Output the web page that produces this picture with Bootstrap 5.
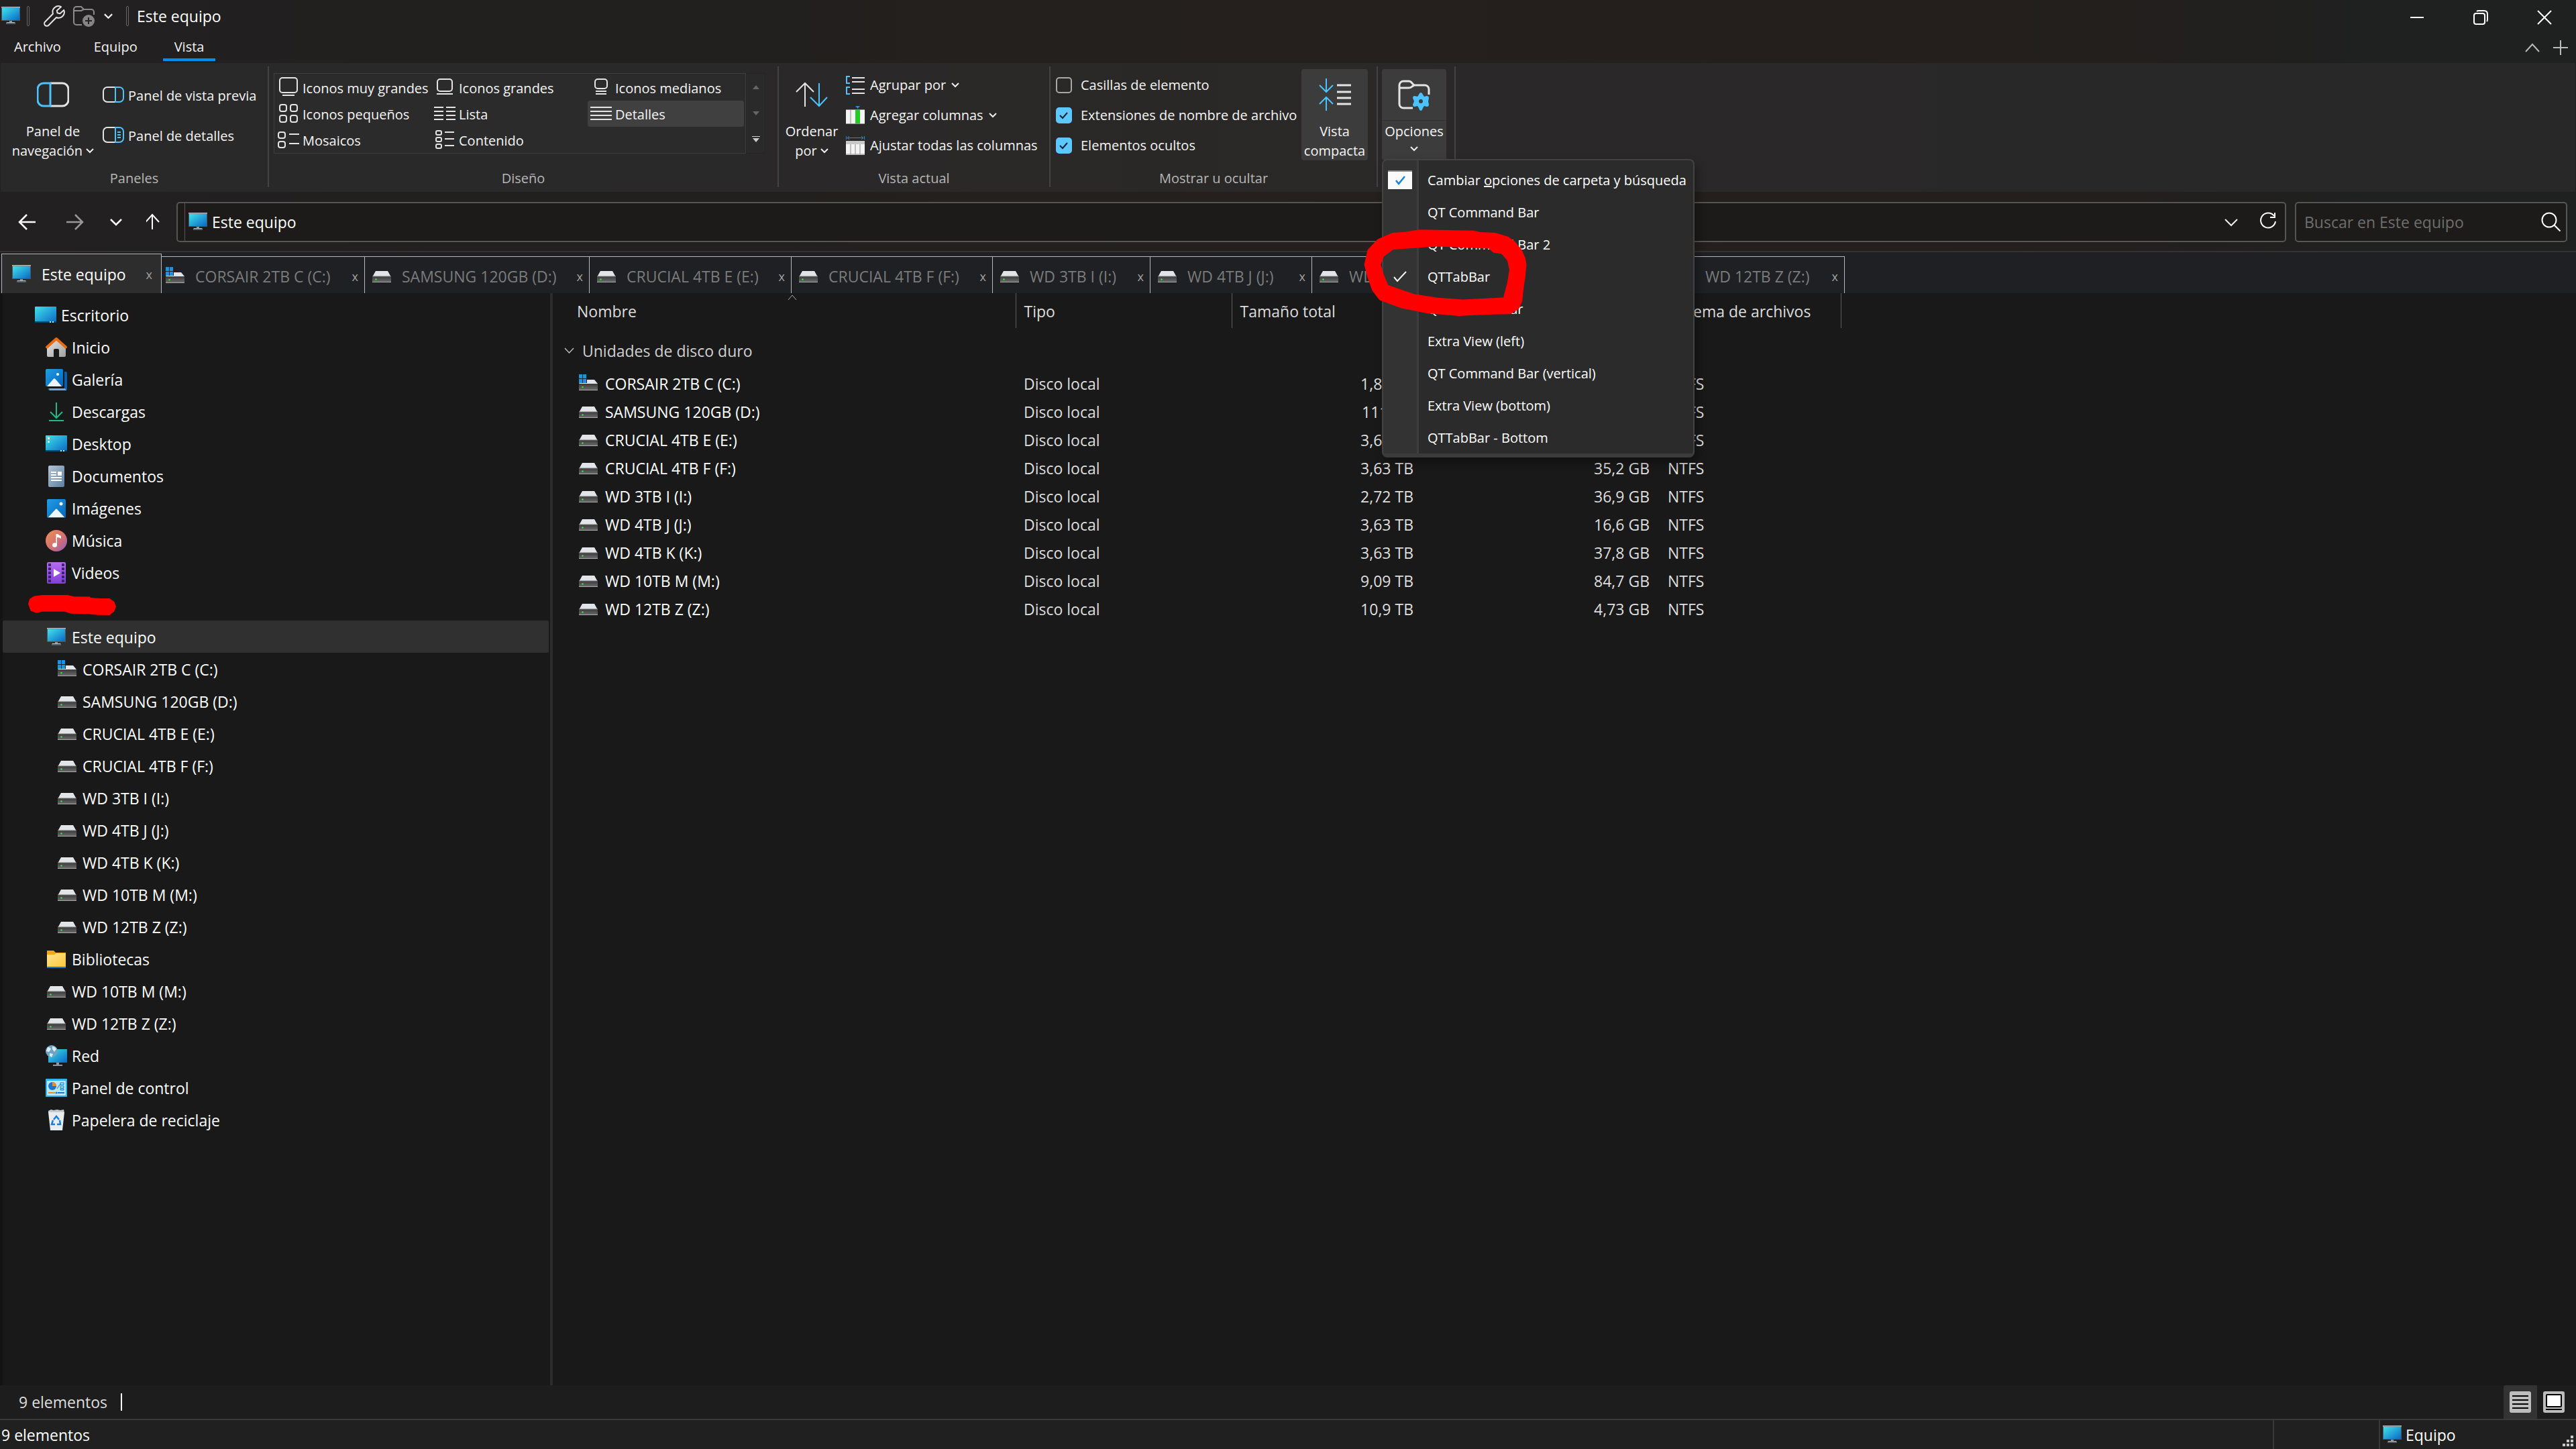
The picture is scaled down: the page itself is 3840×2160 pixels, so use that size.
<!DOCTYPE html>
<html lang="es" data-bs-theme="dark">
<head>
<meta charset="utf-8">
<meta name="viewport" content="width=device-width, initial-scale=1">
<title>Este equipo</title>
<link href="https://cdn.jsdelivr.net/npm/bootstrap@5.3.0/dist/css/bootstrap.min.css" rel="stylesheet">
<style>
:root{--ui:"Open Sans","Noto Sans",sans-serif}
body{font-family:var(--ui);font-size:23px;line-height:30px;color:#fff;background:#191919;overflow:hidden}
svg{display:block;flex:none}
button{font:inherit;color:inherit;background:none;border:0;padding:0}
.i28{width:28px;height:28px}.i32{width:32px;height:32px}.i48{width:48px;height:48px}
.ln{fill:none;stroke:#e4e4e4;stroke-width:2}
.ln.thick{stroke-width:3}
.chrome-bg{background:linear-gradient(90deg,#222021 0,#21201e 25%,#25201d 48%,#241f1c 78%,#1f2020 92%)}
.titlebar{height:48px;padding-left:2px}
.title-tools{gap:12px;margin:0 18px 0 21px}
.vsep{width:4px;height:30px;border:1px solid #666;border-radius:2px}
.app-sep{margin-left:10px}
.win-btns{gap:73px;padding-right:36px}
.menu-tabs{height:46px;font-size:20px;padding-left:21px;gap:49px}
.menu-tabs a{color:#f2f2f2;text-decoration:none;height:43px;line-height:44px;border-bottom:4px solid transparent}
.menu-tabs a.active{border-bottom-color:#0090f5;padding:0 17px;margin-left:-11px}
.ribbon{background:linear-gradient(90deg,#292929 0,#2a292a 20%,#2a2827 45%,#2a2829 72%,#282828 80%);height:192px;padding:5px 0 7px;margin:0 1px;font-size:20px;line-height:29px;color:#f4f4f4}
.rgroup{border-right:2px solid #434343;display:flex;flex-direction:column}
.rgroup>div{flex:1 1 auto}
.rlabel{text-align:center;line-height:26px;color:#b6b6b6;margin:0}
.g-panes{width:400px}.g-layout{width:760px}.g-view{width:405px}.g-show{width:488px}.g-opt{width:116px}
.big{height:136px;margin-top:4px;display:flex;flex-direction:column;align-items:center;padding-top:14px;border-radius:4px}
.big svg.i48{margin-bottom:16px}
.big.on{background:#3c3c3c}
.nav-btn{width:130px;margin-left:13px}.sort-btn{width:84px;margin-left:7px}.compact-btn{width:99px}
.opt-btn.on{width:96px;background:linear-gradient(#3c3c3c 76px,#313131 76px,#313131 77px,#3c3c3c 77px)}
.small-btn{display:flex;align-items:center;text-align:left;white-space:nowrap}
.pcol{padding-top:20px;gap:14px;margin-left:9px}.pcol .small-btn{height:46px;gap:6px}
.gallery{border:1px solid #3e3e3e;width:704px;height:120px;margin:10px 0 0 7px;padding:1px;display:grid;grid-template-columns:repeat(3,233px);grid-auto-rows:39px;background:#2b2b2b}
.gallery button{padding:1px 0 0 4px;gap:5px;border-radius:4px}
.gallery button.on{background:#404040}
.gscroll{width:29px;height:120px;margin-top:10px;border:1px solid #252525;background:#2a2a2a}
.gscroll button{height:39px;width:27px;display:flex;align-items:center;justify-content:center}
.vcol{padding-top:5px}.vcol .small-btn,.vcol .form-check{height:45px;gap:8px}
.view-col{margin-left:9px}
.check-col{width:374px;padding-left:8px}
.vcol .form-check{display:flex;align-items:center;padding:0;margin:0;min-height:0;gap:13px}
.vcol .form-check-input{width:24px;height:24px;margin:0;float:none;background-color:transparent;border:2px solid #a8a8a8;border-radius:5px;flex:none}
.vcol .form-check-input:checked{background-color:#5cc8ff;border-color:#5cc8ff;background-image:url("data:image/svg+xml,%3csvg xmlns='http://www.w3.org/2000/svg' viewBox='0 0 20 20'%3e%3cpath fill='none' stroke='%23102030' stroke-width='2' d='M4 10l4 4 7-8'/%3e%3c/svg%3e")}
.opt-wrap{margin-left:6px}
.opt-menu{position:absolute;top:138px;left:0;width:466px;padding:5px 0 0;border:2px solid #434343;border-radius:8px;background:linear-gradient(90deg,#333 50px,#3d3d3d 50px,#3d3d3d 53px,#2b2b2b 53px);box-shadow:4px 8px 14px rgba(0,0,0,.35);z-index:20;border-bottom:6px solid #3b3b3b;font-size:20px;display:block}
.opt-menu button{height:48px;width:100%;display:flex;align-items:center;color:#fff;text-align:left;white-space:nowrap}
.opt-menu .slot{width:66px;padding-left:7px;flex:none}
.ring{position:absolute;left:-31px;top:100px;width:249px;height:134px;pointer-events:none}
.navrow{height:88px;padding:2px 13px 0 0}
.navrow .arrows{width:263px;padding-left:24px;gap:36px}
.field{height:60px;border:2px solid #555;border-radius:5px;background:#1c1b19}
.crumb{height:56px;border-left:1px solid #555;margin-left:10px;padding-left:5px;gap:7px}
.addr-btns{gap:32px;margin-right:12px}
.search{width:406px;margin-left:13px;padding-right:7px}
.search input{background:none;border:0;color:#fff;padding:0 0 0 12px;outline:0;flex:1;min-width:0}
.search input::placeholder{color:#6e6e6e;opacity:1}
.tabstrip{border-top:2px solid #35322f;background:#1e2023;height:63px;display:grid;grid-template-columns:239px 303px 335px 301px 300px 235px 241px 246px 285px 263px;align-items:end;padding-left:2px;flex:none}
.tabstrip a{height:55px;border-top:1px solid #b8b8b8;border-right:1px solid #b8b8b8;color:#7b7b7b;text-decoration:none;display:flex;align-items:center;padding:4px 9px 0 6px;white-space:nowrap}
.tabstrip a svg{margin-right:16px}
.tabstrip a.hdtab{padding-left:11px}
.tabstrip a i{font-style:normal;font-size:18px;margin-left:auto;color:#a0a0a0;line-height:20px}
.tabstrip a.active{height:59px;border-left:1px solid #b8b8b8;background:#2d2d2d;color:#fff;padding:2px 13px 0 15px}
.panes{min-height:0}
.tree{flex:0 0 820px;border-left:4px solid #131313;padding-top:8px}
.tree a{height:48px;display:flex;align-items:center;gap:7px;color:#fff;text-decoration:none;padding:1px 0 0 64px;margin-right:2px;border-radius:2px}
.tree a.l0{padding-left:48px}.tree a.l2{padding-left:82px;gap:9px}
.tree a.sel{background:#303030}
.tree .scrib{height:48px;padding:10px 0 0 38px}
.list{border-left:4px solid #2c2c2c;min-width:0}
.files{table-layout:fixed;width:1920px;border-collapse:collapse;color:#dedede}
.files th,.files td{font-weight:400;padding:0 12px;white-space:nowrap}
.files .cn{width:690px}.files .ct{width:322px}.files .cs{width:286px}.files .cf{width:352px}.files .cx{width:270px}
.files thead th{height:52px;border-right:1px solid #5c5c5c;color:#dcdcdc;padding-top:1px}
.files thead th:first-child{padding-left:36px;background:url("data:image/svg+xml,%3csvg xmlns='http://www.w3.org/2000/svg' width='14' height='8'%3e%3cpath fill='none' stroke='%23aaa' d='M1 8l6-7 6 7'/%3e%3c/svg%3e") no-repeat 350px 2px}
.files .grp th{height:62px;padding:6px 0 0 17px;color:#d0d0d0}
.grp div{gap:12px}
.files tbody td{height:42px}
.files tbody td:first-child{color:#fff;padding-left:39px}
.files td div{gap:11px}
.files .num{text-align:right;padding-right:15px}
.status1{height:50px;background:#1d1d1d;padding:0 8px 0 28px;flex:none;color:#dedede}
.status1 .bar{width:2px;height:26px;background:#fff;margin-left:20px}
.status1 .vb{width:50px;height:50px;display:flex;align-items:center;justify-content:center}
.status1 .vb.on{background:#333;border-radius:3px 0 0 0}
.status2{height:45px;border-top:2px solid #393939;background:#202020;padding-left:2px;flex:none}
.status2 .cell{border-left:2px solid #393939;height:43px;width:158px}
.status2 .cell.zone{width:294px;padding-left:4px;gap:6px}
</style>
</head>
<body class="d-flex flex-column vh-100">
<svg width="0" height="0" class="position-absolute" aria-hidden="true">
<defs>
<linearGradient id="blu" x1="0" y1="0" x2="1" y2="1"><stop offset="0" stop-color="#3fe3ea"/><stop offset="1" stop-color="#0a68c4"/></linearGradient>
<linearGradient id="pic" x1="0" y1="0" x2="1" y2="1"><stop offset="0" stop-color="#1f9fe8"/><stop offset="1" stop-color="#0663b8"/></linearGradient>
<linearGradient id="drv" x1="0" y1="0" x2="0" y2="1"><stop offset="0" stop-color="#3a3a3a"/><stop offset="1" stop-color="#6e6e6e"/></linearGradient>
<linearGradient id="mus" x1="0" y1="0" x2="1" y2="1"><stop offset="0" stop-color="#f2914f"/><stop offset=".6" stop-color="#cf6d78"/><stop offset="1" stop-color="#8a5fc0"/></linearGradient>
<linearGradient id="vid" x1="0" y1="0" x2="0" y2="1"><stop offset="0" stop-color="#b56cf0"/><stop offset="1" stop-color="#8240dc"/></linearGradient>
<linearGradient id="doc" x1="0" y1="0" x2="1" y2="1"><stop offset="0" stop-color="#b4c4d6"/><stop offset="1" stop-color="#5c7f9f"/></linearGradient>
<linearGradient id="fol" x1="0" y1="0" x2="1" y2="1"><stop offset="0" stop-color="#ffe394"/><stop offset="1" stop-color="#fcc838"/></linearGradient>
<linearGradient id="hom" x1="0" y1="0" x2="1" y2="1"><stop offset="0" stop-color="#e6e6e6"/><stop offset="1" stop-color="#a0a0a0"/></linearGradient>
</defs>
<symbol id="pc" viewBox="0 0 28 28"><path d="M0 0h28v21H0z" fill="#4a5560"/><path d="M0 0h28v1.500H0z" fill="#b9c2ca"/><path d="M1 2h26v18H1z" fill="url(#blu)"/><path d="M12 21h4v2h-4z" fill="#8a949c"/><path d="M7 23h14v3H7z" fill="#56616b"/><path d="M8 23h12v1H8z" fill="#b9c2ca"/></symbol>
<symbol id="hd" viewBox="0 0 28 28"><path d="M5 6h18l5 9H0z" fill="#e3e4e8"/><path d="M0 14h28v9H0z" fill="url(#drv)"/><path d="M0 13.500h28v1H0z" fill="#777"/><path d="M0 22h28v1H0z" fill="#a8a8a8"/><circle cx="5.500" cy="18.500" r="1.300" fill="#3be03b"/></symbol>
<symbol id="hdw" viewBox="0 0 28 28"><path d="M6 8h17l5 6H0z" fill="#e3e4e8"/><path d="M0 14h28v10H0z" fill="url(#drv)"/><path d="M0 23h28v1H0z" fill="#a8a8a8"/><circle cx="5.500" cy="19" r="1.300" fill="#3be03b"/><path d="M0 0h12v13H0z" fill="#1e2023"/><path d="M0 0h5v6H0zM6 0h5v6H6zM0 7h5v6H0zM6 7h5v6H6z" fill="#1b93e4"/></symbol>
<symbol id="desk" viewBox="0 0 32 32"><rect y="3" width="32" height="24" rx="1" fill="url(#blu)"/><path d="M0 25h32v1a1 1 0 0 1-1 1H1a1 1 0 0 1-1-1z" fill="#0b4675"/><path d="M22 25h2v2h-2zM26 25h2v2h-2z" fill="#cfe6f5"/></symbol>
<symbol id="desk2" viewBox="0 0 32 32"><use href="#desk"/><path d="M3 6h3v3H3zM3 11h3v3H3z" fill="#fff"/></symbol>
<symbol id="home" viewBox="0 0 32 32"><path d="M2 15L16 4l14 11v13a2 2 0 0 1-2 2h-8V20h-8v10H4a2 2 0 0 1-2-2z" fill="url(#hom)"/><path d="M12 30V20q0-2 2-2h4q2 0 2 2v10z" fill="#191919"/><path d="M2 15.500L16 3l14 12.500" fill="none" stroke="#ea6a0c" stroke-width="4" stroke-linejoin="round" stroke-linecap="round"/></symbol>
<symbol id="gal" viewBox="0 0 32 32"><path d="M28 4h2a2 2 0 0 1 2 2v24a2 2 0 0 1-2 2H6a2 2 0 0 1-2-3h24z" fill="#0a5eb0"/><path d="M5 29h24l2 3H6z" fill="#74a8dc"/><path d="M26 0h2v28H4v-2h22z" fill="#191919"/><rect width="26" height="26" rx="2" fill="url(#pic)"/><path d="M2 26l9.500-11q1.500-1.600 3 0L24 26z" fill="#e9f4fd"/><circle cx="18" cy="8" r="2" fill="#fff"/></symbol>
<symbol id="down" viewBox="0 0 32 32"><path d="M16 2v22M7 16l9 9 9-9M5 29h22" fill="none" stroke="#22b88c" stroke-width="2"/></symbol>
<symbol id="docs" viewBox="0 0 32 32"><rect x="4" width="24" height="32" rx="2" fill="url(#doc)"/><path d="M8 9h8v2H8zM8 13h8v2H8zM18 9h6v6h-6zM8 17h16v2H8zM8 21h16v2H8z" fill="#fff"/></symbol>
<symbol id="img" viewBox="0 0 32 32"><rect x="2" y="2" width="28" height="28" rx="2" fill="url(#pic)"/><path d="M4 29l11-12q1-1 2 0l11 12z" fill="#eef6fd"/><circle cx="23" cy="9" r="2.500" fill="#fff"/></symbol>
<symbol id="music" viewBox="0 0 32 32"><circle cx="16" cy="16" r="16" fill="url(#mus)"/><ellipse cx="13.500" cy="22.500" rx="3.500" ry="3.300" fill="#fff"/><path d="M15.500 6v17H17V11q4 0 6 2V9q-3-1-5-3z" fill="#fff"/></symbol>
<symbol id="video" viewBox="0 0 32 32"><rect x="2" width="28" height="32" rx="2" fill="url(#vid)"/><path d="M6 2v28M26 2v28" stroke="#3b2170" stroke-width="4" stroke-dasharray="4 2"/><path d="M12 10l10 6-10 6z" fill="#fff"/></symbol>
<symbol id="lib" viewBox="0 0 32 32"><path d="M2 3h10l3 3h15v20H2z" fill="#f0a818"/><path d="M2 9h11l3-2h14v20H2z" fill="url(#fol)"/><path d="M2 27h28v2H2z" fill="#1280d8"/></symbol>
<symbol id="net" viewBox="0 0 32 32"><path d="M4 6h28v20H4z" fill="url(#blu)"/><path d="M16 26h4v3h-4zM11 29h14v2H11z" fill="#8b98a6"/><circle cx="9" cy="9" r="9" fill="#6fa5c4"/><path d="M3 3q4 0 5 3l-3 4-4-1zM10 2q4 0 6 4l-3 4-3-4zM6 12l5 1-2 5-3-2z" fill="#d9edf6"/></symbol>
<symbol id="cpl" viewBox="0 0 32 32"><rect y="2" width="32" height="27" rx="1" fill="#2fb4f0"/><path d="M2 5h28v22H2z" fill="#b9e6fb"/><circle cx="10" cy="13" r="6" fill="#1779cf"/><path d="M10 13V7a6 6 0 0 1 6 6z" fill="#f58a1f"/><path d="M17 17l4-6h2M22 8h5v3h-5zM22 13h5v3h-5zM22 17h5v2h-5z" fill="none" stroke="#1779cf"/><path d="M4 23h10" stroke="#f58a1f" stroke-width="2"/><path d="M18 23h10" stroke="#1779cf" stroke-width="2"/><circle cx="16" cy="23" r="1.500" fill="#1779cf"/></symbol>
<symbol id="bin" viewBox="0 0 32 32"><path d="M4 2l4-2 4 1 5-1 5 1 5-1 1 5H4z" fill="#c4ccd2"/><path d="M4 4h24l-3 27H7z" fill="#e9edf0"/><path d="M12 15l4-5 4 5M21 16l1 6h-5M14 22h-5l2-6" fill="none" stroke="#1a7fd6" stroke-width="2.500"/></symbol>
<symbol id="chev" viewBox="0 0 12 8"><path d="M1 1l5 5 5-5" fill="none" stroke="#eee" stroke-width="2"/></symbol>
</svg>

<header class="chrome-bg flex-shrink-0">
  <div class="titlebar d-flex align-items-center">
    <svg class="i28"><use href="#pc"/></svg>
    <span class="vsep app-sep"></span>
    <div class="title-tools d-flex align-items-center">
      <button aria-label="Propiedades"><svg class="i32" viewBox="0 0 32 32"><path class="ln" d="M26 2.200A8.500 8.500 0 0 0 14 12.500L2.200 24.500a3.600 3.600 0 0 0 5.200 5.200L19 18A8.500 8.500 0 0 0 30.200 7l-5.700 5.200-4-1-.7-3.400z" stroke-linejoin="round"/></svg></button>
      <button aria-label="Nueva carpeta"><svg class="i32" viewBox="0 0 32 32"><path d="M13 29H5a4 4 0 0 1-4-4V6a4 4 0 0 1 4-4h7l4 4h11a4 4 0 0 1 4 4v4M1 8h11l4-2" fill="none" stroke="#8b8b8b" stroke-width="2"/><circle cx="23" cy="23" r="9" fill="#858585"/><path d="M23 18v10M18 23h10" stroke="#222" stroke-width="2"/></svg></button>
      <button aria-label="Personalizar"><svg width="17" height="9"><use href="#chev"/></svg></button>
    </div>
    <span class="vsep"></span>
    <span class="ps-2 ms-1">Este equipo</span>
    <div class="win-btns ms-auto d-flex align-items-center pt-1">
      <button aria-label="Minimizar"><svg width="22" height="22"><path d="M1 11h20" stroke="#fff" stroke-width="2"/></svg></button>
      <button aria-label="Restaurar"><svg width="22" height="22" fill="none" stroke="#fff" stroke-width="2"><rect x="1" y="5" width="16" height="16" rx="3"/><path d="M5 2q1-1 3-1h8q5 0 5 5v8q0 2-1 3"/></svg></button>
      <button aria-label="Cerrar"><svg width="22" height="22"><path d="M1 1l20 20M21 1L1 21" stroke="#fff" stroke-width="2"/></svg></button>
    </div>
  </div>
  <nav class="menu-tabs d-flex">
    <a href="#">Archivo</a><a href="#">Equipo</a><a href="#" class="active">Vista</a>
    <div class="ms-auto d-flex align-items-center gap-3 pe-2 me-1">
      <button aria-label="Contraer" class="me-1"><svg width="22" height="14"><path d="M1 13L11 2l10 11" fill="none" stroke="#bbb" stroke-width="2"/></svg></button>
      <button aria-label="Agregar"><svg width="22" height="24"><path d="M11 1v22M0 12h22" stroke="#bbb" stroke-width="2"/></svg></button>
    </div>
  </nav>
  <section class="ribbon d-flex">
    <div class="rgroup g-panes">
      <div class="d-flex">
        <button class="big nav-btn"><svg class="i48" viewBox="0 0 48 48"><path d="M20 7h18a9 9 0 0 1 9 9v16a9 9 0 0 1-9 9H20" class="ln thick"/><path d="M20 7H10a9 9 0 0 0-9 9v16a9 9 0 0 0 9 9h10z" fill="none" stroke="#4cc2ff" stroke-width="3"/></svg><span>Panel de</span><span class="text-nowrap">navegación <svg class="d-inline-block mb-1" width="12" height="8"><use href="#chev"/></svg></span></button>
        <div class="pcol d-flex flex-column">
          <button class="small-btn"><svg class="i32" viewBox="0 0 32 32"><path d="M19 4H7a6 6 0 0 0-6 6v10a6 6 0 0 0 6 6h12" class="ln"/><path d="M19 4h6a6 6 0 0 1 6 6v10a6 6 0 0 1-6 6h-6z" fill="none" stroke="#4cc2ff" stroke-width="2"/></svg>Panel de vista previa</button>
          <button class="small-btn"><svg class="i32" viewBox="0 0 32 32"><path d="M19 4H7a6 6 0 0 0-6 6v10a6 6 0 0 0 6 6h12" class="ln"/><path d="M19 4h6a6 6 0 0 1 6 6v10a6 6 0 0 1-6 6h-6zM22 11h5M22 15h5M22 19h5" fill="none" stroke="#4cc2ff" stroke-width="2"/></svg>Panel de detalles</button>
        </div>
      </div>
      <p class="rlabel">Paneles</p>
    </div>
    <div class="rgroup g-layout">
      <div class="d-flex">
        <div class="gallery">
          <button class="small-btn"><svg class="i32" viewBox="0 0 32 32"><rect x="3" y="1" width="26" height="22" rx="4" class="ln"/><path d="M7 27h18" class="ln"/></svg>Iconos muy grandes</button>
          <button class="small-btn"><svg class="i32" viewBox="0 0 32 32"><rect x="5" y="3" width="22" height="18" rx="4" class="ln"/><path d="M4 25h24" class="ln"/></svg>Iconos grandes</button>
          <button class="small-btn"><svg class="i32" viewBox="0 0 32 32"><rect x="7" y="3" width="18" height="14" rx="4" class="ln"/><path d="M8 21h16M8 25h16" class="ln"/></svg>Iconos medianos</button>
          <button class="small-btn"><svg class="i32" viewBox="0 0 32 32"><g class="ln"><rect x="3" y="2" width="10" height="10" rx="3"/><rect x="19" y="2" width="10" height="10" rx="3"/><rect x="3" y="18" width="10" height="10" rx="3"/><rect x="19" y="18" width="10" height="10" rx="3"/></g></svg>Iconos pequeños</button>
          <button class="small-btn"><svg class="i32" viewBox="0 0 32 32"><path class="ln" d="M0 6h14M0 12h14M0 18h14M0 24h14M18 6h14M18 12h14M18 18h14M18 24h14"/></svg>Lista</button>
          <button class="small-btn on"><svg class="i32" viewBox="0 0 32 32"><path class="ln" d="M0 6h32M0 12h32M0 18h32M0 24h32"/></svg>Detalles</button>
          <button class="small-btn"><svg class="i32" viewBox="0 0 32 32"><g class="ln"><rect x="1" y="4" width="10" height="9" rx="3"/><rect x="1" y="18" width="10" height="9" rx="3"/><path d="M17 7h15M17 21h15"/></g></svg>Mosaicos</button>
          <button class="small-btn"><svg class="i32" viewBox="0 0 32 32"><g class="ln"><rect x="3" y="2" width="8" height="6" rx="2"/><rect x="3" y="12" width="8" height="6" rx="2"/><rect x="3" y="22" width="8" height="6" rx="2"/><path d="M16 4h14M16 14h14M16 24h14"/></g></svg>Contenido</button>
        </div>
        <div class="gscroll">
          <button aria-label="Arriba"><svg width="10" height="6"><path d="M0 6l5-6 5 6z" fill="#666"/></svg></button>
          <button aria-label="Abajo"><svg width="10" height="6"><path d="M0 0l5 6 5-6z" fill="#666"/></svg></button>
          <button aria-label="Más"><svg width="12" height="9"><path d="M0 0h12v1H0zM1 3l5 6 5-6z" fill="#ccc"/></svg></button>
        </div>
      </div>
      <p class="rlabel">Diseño</p>
    </div>
    <div class="rgroup g-view">
      <div class="d-flex">
        <button class="big sort-btn"><svg class="i48" viewBox="0 0 48 48"><path d="M14 42V7M1 20L14 7l13 13" class="ln"/><path d="M35 7v34M22 28l13 13 12-13" fill="none" stroke="#4cc2ff" stroke-width="2"/></svg><span>Ordenar</span><span>por <svg class="d-inline-block mb-1" width="12" height="8"><use href="#chev"/></svg></span></button>
        <div class="vcol view-col">
          <button class="small-btn"><svg class="i28" viewBox="0 0 28 28"><path class="ln" d="M9 3h19M9 9h19M9 20h19M9 26h19"/><path d="M6 1H1v10h5M6 17H1v10h5" fill="none" stroke="#4cc2ff" stroke-width="2"/></svg>Agrupar por <svg width="12" height="8"><use href="#chev"/></svg></button>
          <button class="small-btn"><svg class="i28" viewBox="0 0 28 28"><path d="M14 0h7l-3.500 4z" fill="#2b88d8"/><path d="M0 5h28v22H0z" fill="#f4f4f4"/><path d="M14 6h7v20h-7z" fill="#22cc22"/><path d="M7 5v22M0 5.500h28M0 26.500h28" stroke="#8a8a8a"/></svg>Agregar columnas <svg width="12" height="8"><use href="#chev"/></svg></button>
          <button class="small-btn"><svg class="i28" viewBox="0 0 28 28"><path d="M.5 0v5M27.500 0v5M2 2.500h24M5 0L2 2.500 5 5M23 0l3 2.500L23 5" fill="none" stroke="#2b88d8"/><path d="M0 7h28v21H0z" fill="#f4f4f4"/><path d="M0 7h28v5H0z" fill="#c8c8c8"/><path d="M7 12v15M14 12v15M21 12v15M0 27h28" stroke="#8a8a8a"/></svg>Ajustar todas las columnas</button>
        </div>
      </div>
      <p class="rlabel">Vista actual</p>
    </div>
    <div class="rgroup g-show">
      <div class="d-flex">
        <div class="vcol check-col text-nowrap">
          <div class="form-check"><input class="form-check-input" type="checkbox" id="c1"><label for="c1">Casillas de elemento</label></div>
          <div class="form-check"><input class="form-check-input" type="checkbox" id="c2" checked><label for="c2">Extensiones de nombre de archivo</label></div>
          <div class="form-check"><input class="form-check-input" type="checkbox" id="c3" checked><label for="c3">Elementos ocultos</label></div>
        </div>
        <button class="big on compact-btn"><svg class="i48" viewBox="0 0 48 48"><path d="M11 0v19M1 10l10 10 10-10M11 48V28M1 38l10-10 10 10" fill="none" stroke="#4cc2ff" stroke-width="2"/><path d="M27 10h21M27 20h21M27 29h21M27 38h21" class="ln thick"/></svg><span>Vista</span><span>compacta</span></button>
      </div>
      <p class="rlabel">Mostrar u ocultar</p>
    </div>
    <div class="rgroup g-opt">
      <div class="opt-wrap position-relative">
        <button class="big on opt-btn" aria-expanded="true"><svg class="i48" viewBox="0 0 48 48"><path d="M22 44H8a6 6 0 0 1-6-6V10a6 6 0 0 1 6-6h8q3 0 5 3l3 3h16a6 6 0 0 1 6 6v8M2 14h14q3 0 5-2l3-2" class="ln thick"/><path d="M34 21q2 0 3 3l2 3 4-1q3 0 3 3l-1 5 1 5q0 3-3 3l-4-1-2 3q-1 4-3 4t-3-4l-2-3-4 1q-3 0-3-3l2-5-2-5q0-3 3-3l4 1 2-3q1-3 3-3z" fill="#4cc2ff"/><circle cx="34" cy="34" r="3" fill="#3c3c3c"/></svg><span>Opciones</span><svg class="mt-2" width="12" height="8"><use href="#chev"/></svg></button>
        <div class="dropdown-menu opt-menu">
          <button><span class="slot"><svg width="36" height="28"><path d="M0 0h36v28H0z" fill="#fafafa"/><path d="M0 0h36v2H0z" fill="#8a8a8a"/><path d="M12 15l4 5 9-11" fill="none" stroke="#1583e0" stroke-width="2.500"/></svg></span><span>Cambiar <u>o</u>pciones de carpeta y búsqueda</span></button>
          <button><span class="slot"></span>QT Command Bar</button>
          <button><span class="slot"></span>QT Command Bar 2</button>
          <button><span class="slot"><svg width="36" height="28"><path d="M9 15l5 6 13-14" fill="none" stroke="#f4f4f4" stroke-width="2"/></svg></span>QTTabBar</button>
          <button><span class="slot"></span>QT Buttons Bar</button>
          <button><span class="slot"></span>Extra View (left)</button>
          <button><span class="slot"></span>QT Command Bar (vertical)</button>
          <button><span class="slot"></span>Extra View (bottom)</button>
          <button><span class="slot"></span>QTTabBar - Bottom</button>
          <svg class="ring" viewBox="740 660 390 340" preserveAspectRatio="none"><path fill="#f00" fill-rule="evenodd" d="M810 680L840 677 873 668 1000 672 1015 678 1050 680 1080 695 1095 712 1112 745 1120 775 1123 800 1120 850 1117 880 1113 940 1105 968 1085 988 1030 990 965 995 890 985 830 965 780 935 763 900 752 850 744 800 752 745 775 705ZM812 744L790 770 783 800 790 840 800 878 860 912 915 926 975 933 1069 925 1078 870 1083 820 1078 785 1065 760 1045 755 1035 740 915 732 860 738Z"/></svg>
        </div>
      </div>
    </div>
  </section>
  <div class="navrow d-flex align-items-center">
    <div class="arrows d-flex align-items-center">
      <button aria-label="Atrás"><svg class="i32" viewBox="0 0 32 32"><path d="M29 16H6M16 5L5 16l11 11" fill="none" stroke="#fff" stroke-width="2.500"/></svg></button>
      <button aria-label="Adelante" class="ms-1"><svg class="i32" viewBox="0 0 32 32"><path d="M3 16h23M16 5l11 11-11 11" fill="none" stroke="#999" stroke-width="2.500"/></svg></button>
      <button aria-label="Recientes"><svg width="18" height="12"><path d="M1 2l8 8 8-8" fill="none" stroke="#fff" stroke-width="2.500"/></svg></button>
      <button aria-label="Subir"><svg width="22" height="32"><path d="M9 27V5M-1 16L9 5l10 11" fill="none" stroke="#fff" stroke-width="2"/></svg></button>
    </div>
    <div class="field flex-grow-1 d-flex align-items-center">
      <div class="crumb d-flex align-items-center"><svg class="i28"><use href="#pc"/></svg><span>Este equipo</span></div>
      <div class="addr-btns ms-auto d-flex align-items-center">
        <button aria-label="Historial"><svg width="20" height="13"><path d="M1 2l9 9 9-9" fill="none" stroke="#eee" stroke-width="2"/></svg></button>
        <button aria-label="Actualizar"><svg width="26" height="30"><path d="M22 6a11 11 0 1 0 2 8M23 1v7h-7" fill="none" stroke="#fff" stroke-width="2"/></svg></button>
      </div>
    </div>
    <div class="field search d-flex align-items-center">
      <input type="text" placeholder="Buscar en Este equipo" aria-label="Buscar en Este equipo">
      <button aria-label="Buscar"><svg width="30" height="30" fill="none" stroke="#fff" stroke-width="2"><circle cx="12" cy="12" r="10.500"/><path d="M19.500 19.500l9 9"/></svg></button>
    </div>
  </div>
</header>

<nav class="tabstrip">
  <a href="#" class="active"><svg class="i28"><use href="#pc"/></svg>Este equipo<i>x</i></a>
  <a href="#"><svg class="i28"><use href="#hdw"/></svg>CORSAIR 2TB C (C:)<i>x</i></a>
  <a href="#" class="hdtab"><svg class="i28"><use href="#hd"/></svg>SAMSUNG 120GB (D:)<i>x</i></a>
  <a href="#" class="hdtab"><svg class="i28"><use href="#hd"/></svg>CRUCIAL 4TB E (E:)<i>x</i></a>
  <a href="#" class="hdtab"><svg class="i28"><use href="#hd"/></svg>CRUCIAL 4TB F (F:)<i>x</i></a>
  <a href="#" class="hdtab"><svg class="i28"><use href="#hd"/></svg>WD 3TB I (I:)<i>x</i></a>
  <a href="#" class="hdtab"><svg class="i28"><use href="#hd"/></svg>WD 4TB J (J:)<i>x</i></a>
  <a href="#" class="hdtab"><svg class="i28"><use href="#hd"/></svg>WD 4TB K (K:)<i>x</i></a>
  <a href="#" class="hdtab"><svg class="i28"><use href="#hd"/></svg>WD 10TB M (M:)<i>x</i></a>
  <a href="#" class="hdtab"><svg class="i28"><use href="#hd"/></svg>WD 12TB Z (Z:)<i>x</i></a>
</nav>

<main class="panes d-flex flex-grow-1">
  <nav class="tree">
    <a href="#" class="l0"><svg class="i32"><use href="#desk"/></svg>Escritorio</a>
    <a href="#"><svg class="i32"><use href="#home"/></svg>Inicio</a>
    <a href="#"><svg class="i32"><use href="#gal"/></svg>Galería</a>
    <a href="#"><svg class="i32"><use href="#down"/></svg>Descargas</a>
    <a href="#"><svg class="i32"><use href="#desk2"/></svg>Desktop</a>
    <a href="#"><svg class="i32"><use href="#docs"/></svg>Documentos</a>
    <a href="#"><svg class="i32"><use href="#img"/></svg>Imágenes</a>
    <a href="#"><svg class="i32"><use href="#music"/></svg>Música</a>
    <a href="#"><svg class="i32"><use href="#video"/></svg>Videos</a>
    <div class="scrib"><svg width="131" height="30" viewBox="78 1252 245 84" preserveAspectRatio="none"><path fill="#f00" d="M78 1290L82 1268 95 1256 118 1252 188 1252 206 1258 250 1259 252 1263 280 1266 305 1266 318 1280 323 1300 318 1320 305 1336 272 1335 245 1331 197 1330 180 1321 118 1321 100 1327 85 1318Z"/></svg></div>
    <a href="#" class="sel"><svg class="i32" viewBox="-2 -2 32 32"><use href="#pc" width="28" height="28"/></svg>Este equipo</a>
    <a href="#" class="l2"><svg class="i28"><use href="#hdw"/></svg>CORSAIR 2TB C (C:)</a>
    <a href="#" class="l2"><svg class="i28"><use href="#hd"/></svg>SAMSUNG 120GB (D:)</a>
    <a href="#" class="l2"><svg class="i28"><use href="#hd"/></svg>CRUCIAL 4TB E (E:)</a>
    <a href="#" class="l2"><svg class="i28"><use href="#hd"/></svg>CRUCIAL 4TB F (F:)</a>
    <a href="#" class="l2"><svg class="i28"><use href="#hd"/></svg>WD 3TB I (I:)</a>
    <a href="#" class="l2"><svg class="i28"><use href="#hd"/></svg>WD 4TB J (J:)</a>
    <a href="#" class="l2"><svg class="i28"><use href="#hd"/></svg>WD 4TB K (K:)</a>
    <a href="#" class="l2"><svg class="i28"><use href="#hd"/></svg>WD 10TB M (M:)</a>
    <a href="#" class="l2"><svg class="i28"><use href="#hd"/></svg>WD 12TB Z (Z:)</a>
    <a href="#"><svg class="i32"><use href="#lib"/></svg>Bibliotecas</a>
    <a href="#"><svg class="i32" viewBox="-2 -2 32 32"><use href="#hd" width="28" height="28"/></svg>WD 10TB M (M:)</a>
    <a href="#"><svg class="i32" viewBox="-2 -2 32 32"><use href="#hd" width="28" height="28"/></svg>WD 12TB Z (Z:)</a>
    <a href="#"><svg class="i32"><use href="#net"/></svg>Red</a>
    <a href="#"><svg class="i32"><use href="#cpl"/></svg>Panel de control</a>
    <a href="#"><svg class="i32"><use href="#bin"/></svg>Papelera de reciclaje</a>
  </nav>
  <section class="list flex-grow-1">
    <table class="files">
      <thead><tr><th class="cn">Nombre</th><th class="ct">Tipo</th><th class="cs">Tamaño total</th><th class="cf">Espacio disponible</th><th class="cx">Sistema de archivos</th></tr></thead>
      <tbody>
        <tr class="grp"><th colspan="5"><div class="d-flex align-items-center"><svg width="15" height="10"><path d="M1 1l6.500 7L14 1" fill="none" stroke="#bbb" stroke-width="1.500"/></svg>Unidades de disco duro</div></th></tr>
        <tr><td><div class="d-flex align-items-center"><svg class="i28"><use href="#hdw"/></svg>CORSAIR 2TB C (C:)</div></td><td>Disco local</td><td class="num">1,81 TB</td><td></td><td>NTFS</td></tr>
        <tr><td><div class="d-flex align-items-center"><svg class="i28"><use href="#hd"/></svg>SAMSUNG 120GB (D:)</div></td><td>Disco local</td><td class="num">111 GB</td><td></td><td>NTFS</td></tr>
        <tr><td><div class="d-flex align-items-center"><svg class="i28"><use href="#hd"/></svg>CRUCIAL 4TB E (E:)</div></td><td>Disco local</td><td class="num">3,63 TB</td><td></td><td>NTFS</td></tr>
        <tr><td><div class="d-flex align-items-center"><svg class="i28"><use href="#hd"/></svg>CRUCIAL 4TB F (F:)</div></td><td>Disco local</td><td class="num">3,63 TB</td><td class="num">35,2 GB</td><td>NTFS</td></tr>
        <tr><td><div class="d-flex align-items-center"><svg class="i28"><use href="#hd"/></svg>WD 3TB I (I:)</div></td><td>Disco local</td><td class="num">2,72 TB</td><td class="num">36,9 GB</td><td>NTFS</td></tr>
        <tr><td><div class="d-flex align-items-center"><svg class="i28"><use href="#hd"/></svg>WD 4TB J (J:)</div></td><td>Disco local</td><td class="num">3,63 TB</td><td class="num">16,6 GB</td><td>NTFS</td></tr>
        <tr><td><div class="d-flex align-items-center"><svg class="i28"><use href="#hd"/></svg>WD 4TB K (K:)</div></td><td>Disco local</td><td class="num">3,63 TB</td><td class="num">37,8 GB</td><td>NTFS</td></tr>
        <tr><td><div class="d-flex align-items-center"><svg class="i28"><use href="#hd"/></svg>WD 10TB M (M:)</div></td><td>Disco local</td><td class="num">9,09 TB</td><td class="num">84,7 GB</td><td>NTFS</td></tr>
        <tr><td><div class="d-flex align-items-center"><svg class="i28"><use href="#hd"/></svg>WD 12TB Z (Z:)</div></td><td>Disco local</td><td class="num">10,9 TB</td><td class="num">4,73 GB</td><td>NTFS</td></tr>
      </tbody>
    </table>
  </section>
</main>

<footer class="flex-shrink-0">
  <div class="status1 d-flex align-items-center">
    <span>9 elementos</span><span class="bar"></span>
    <button class="vb on ms-auto" aria-label="Detalles"><svg class="i32"><rect width="32" height="32" rx="3" fill="#bdbdbd"/><path d="M4 7h24M4 13h24M4 19h24M4 25h24" stroke="#000" stroke-width="2"/></svg></button>
    <button class="vb" aria-label="Iconos grandes"><svg class="i32"><rect width="32" height="32" rx="3" fill="#bdbdbd"/><rect x="5" y="5" width="22" height="18" rx="1" fill="#fff" stroke="#000" stroke-width="2"/><path d="M4 27h24" stroke="#000" stroke-width="2"/></svg></button>
  </div>
  <div class="status2 d-flex align-items-center">
    <span>9 elementos</span>
    <span class="cell ms-auto"></span>
    <span class="cell zone d-flex align-items-center"><svg class="i28"><use href="#pc"/></svg>Equipo
      <svg class="ms-auto align-self-end mb-1 me-1" width="16" height="16"><path d="M12 0h4v4h-4zM6 6h4v4H6zM12 6h4v4h-4zM0 12h4v4H0zM6 12h4v4H6zM12 12h4v4h-4z" fill="#c8c8c8"/></svg></span>
  </div>
</footer>
<script src="https://cdn.jsdelivr.net/npm/bootstrap@5.3.0/dist/js/bootstrap.bundle.min.js"></script>
</body>
</html>
